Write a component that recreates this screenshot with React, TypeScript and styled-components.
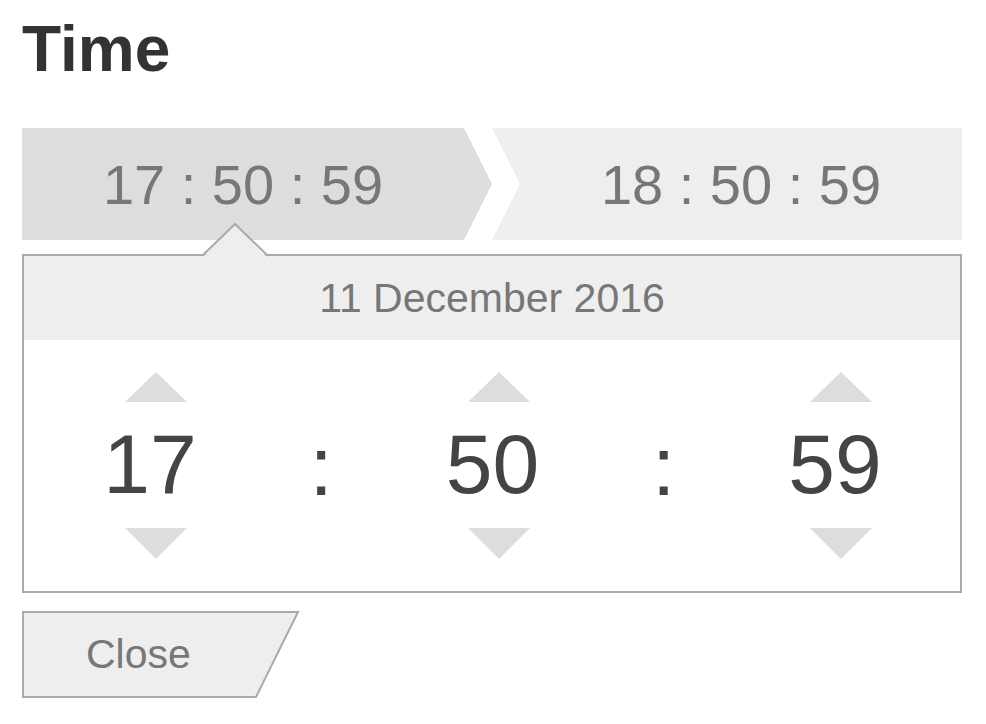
import { Fragment } from "react";
import { createGlobalStyle, styled } from "styled-components";

const GlobalStyle = createGlobalStyle`
  html, body {
    margin: 0;
    padding: 0;
    background: #fff;
    font-family: "Liberation Sans", Arial, Helvetica, sans-serif;
  }
`;

const Page = styled.div`
  width: 940px;
  padding: 17px 0 0 22px;
`;

const Title = styled.h1`
  margin: 0;
  font-size: 64px;
  line-height: 64px;
  font-weight: 700;
  color: #333;
`;

const TabBar = styled.div`
  display: flex;
  margin-top: 47px;
  height: 112px;
`;

const Tab = styled.div<{ $active: boolean }>`
  flex: 1;
  display: flex;
  align-items: center;
  justify-content: center;
  box-sizing: border-box;
  font-size: 56px;
  color: #777;
  background: ${(p) => (p.$active ? "#ddd" : "#eee")};
  padding: ${(p) => (p.$active ? "0 28px 0 0" : "0 0 0 28px")};
  clip-path: ${(p) =>
    p.$active
      ? "polygon(0 0, calc(100% - 28px) 0, 100% 50%, calc(100% - 28px) 100%, 0 100%)"
      : "polygon(0 0, 100% 0, 100% 100%, 0 100%, 28px 50%)"};
`;

const Panel = styled.div`
  position: relative;
  margin-top: 14px;
  border: 2px solid #aaa;
  background: #fff;
`;

const Caret = styled.svg`
  position: absolute;
  top: -33px;
  left: 178px;
  width: 66px;
  height: 34px;
`;

const DateHeader = styled.div`
  height: 84px;
  display: flex;
  align-items: center;
  justify-content: center;
  background: #eee;
  font-size: 41px;
  color: #777;
`;

const Spinners = styled.div`
  display: grid;
  grid-template-columns: 200px 142.5px 200px 142.5px 200px;
  padding: 32px 25px 32px 26px;
  align-items: center;
`;

const Column = styled.div`
  display: flex;
  flex-direction: column;
  align-items: center;
`;

const Arrow = styled.button<{ $dir: "up" | "down" }>`
  width: 0;
  height: 0;
  padding: 0;
  margin-left: 12px;
  background: none;
  cursor: pointer;
  border-left: 31px solid transparent;
  border-right: 31px solid transparent;
  border-top: ${(p) => (p.$dir === "down" ? "31px solid #ddd" : "0")};
  border-bottom: ${(p) => (p.$dir === "up" ? "30px solid #ddd" : "0")};
`;

const Value = styled.div`
  font-size: 84px;
  line-height: 84px;
  color: #444;
  margin: 20px 0 22px;
`;

const Colon = styled.div`
  text-align: center;
  font-size: 84px;
  line-height: 84px;
  color: #444;
`;

const CloseButton = styled.button`
  position: relative;
  display: flex;
  align-items: center;
  width: 278px;
  height: 87px;
  margin-top: 18px;
  padding: 0 0 0 64px;
  border: none;
  background: none;
  font-family: inherit;
  font-size: 41px;
  color: #777;
  cursor: pointer;
`;

const CloseShape = styled.svg`
  position: absolute;
  inset: 0;
  width: 100%;
  height: 100%;
`;

const CloseLabel = styled.span`
  position: relative;
`;

const parts = ["17", "50", "59"];

export default function App() {
  return (
    <Page>
      <GlobalStyle />
      <Title>Time</Title>
      <TabBar>
        <Tab $active>17 : 50 : 59</Tab>
        <Tab $active={false}>18 : 50 : 59</Tab>
      </TabBar>
      <Panel>
        <Caret viewBox="0 0 66 34">
          <polygon points="1,34 33,2 65,34" fill="#eee" />
          <polyline points="0,33 33,1 66,33" fill="none" stroke="#aaa" strokeWidth="2" />
        </Caret>
        <DateHeader>11 December 2016</DateHeader>
        <Spinners>
          {parts.map((v, i) => (
            <Fragment key={i}>
              {i > 0 && <Colon>:</Colon>}
              <Column>
                <Arrow $dir="up" aria-label="increase" />
                <Value>{v}</Value>
                <Arrow $dir="down" aria-label="decrease" />
              </Column>
            </Fragment>
          ))}
        </Spinners>
      </Panel>
      <CloseButton>
        <CloseShape viewBox="0 0 278 87">
          <polygon points="1,1 276,1 234,86 1,86" fill="#eee" stroke="#aaa" strokeWidth="2" />
        </CloseShape>
        <CloseLabel>Close</CloseLabel>
      </CloseButton>
    </Page>
  );
}
